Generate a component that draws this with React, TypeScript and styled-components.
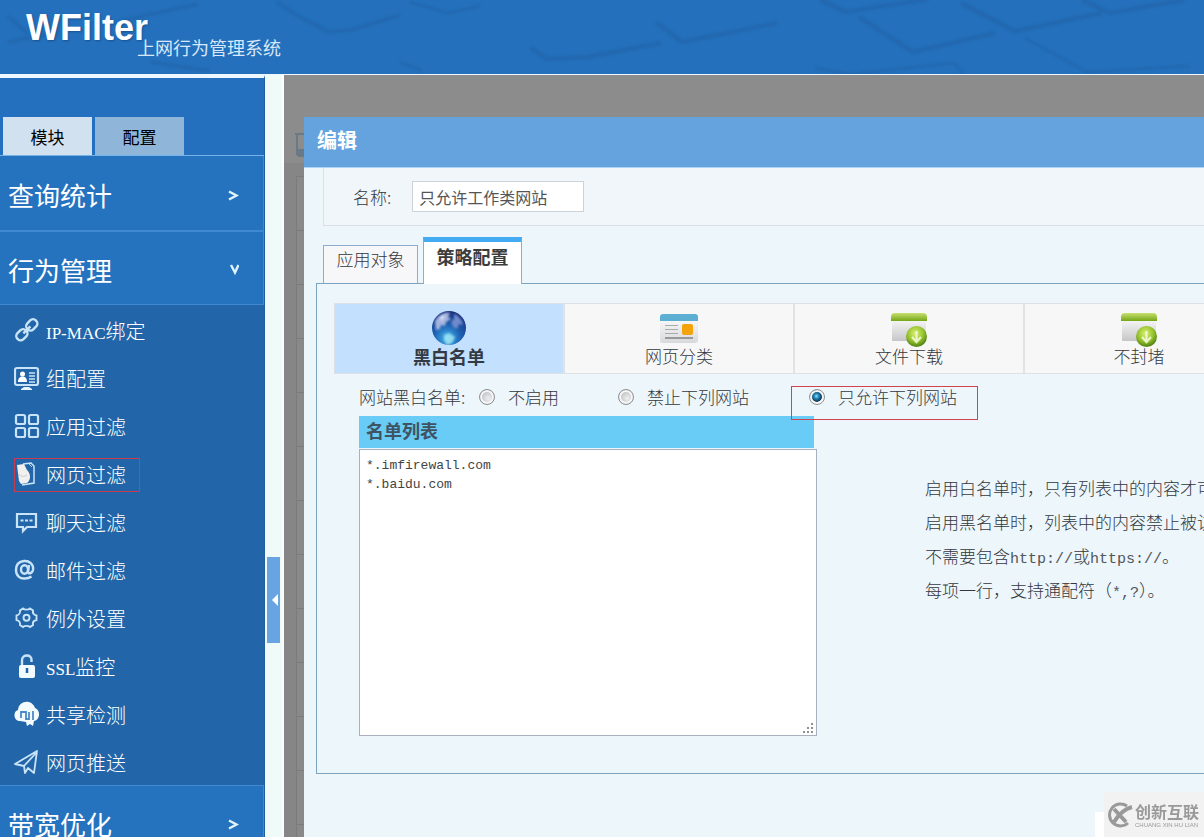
import React, { useState } from "react";
import styled, { createGlobalStyle } from "styled-components";

const GlobalStyle = createGlobalStyle`
  *, *::before, *::after { box-sizing: border-box; }
  body {
    margin: 0;
    font-family: "Noto Sans CJK SC", sans-serif;
    font-size: 17px;
    color: #33383e;
    background: #edf6fa;
  }
  button, input, textarea { font: inherit; color: inherit; margin: 0; }
  button { border: 0; padding: 0; background: none; cursor: pointer; }
  h1, h2, h3, p, ul { margin: 0; padding: 0; font-size: inherit; font-weight: inherit; }
  ul { list-style: none; }
`;

const Page = styled.div`
  display: flex;
  flex-direction: column;
  height: 100vh;
  overflow: hidden;
`;

const Header = styled.header`
  position: relative;
  flex: none;
  height: 75px;
  background: #2470bc;
  border-bottom: 1px solid #eef8fc;
  overflow: hidden;
`;

const HeaderArt = styled.svg`
  position: absolute;
  left: 0;
  top: 0;
`;

const Brand = styled.div`
  position: relative;
  display: flex;
  align-items: flex-start;
  padding: 8px 0 0 26px;
  color: #fff;
`;

const BrandName = styled.h1`
  font: bold 36px/40px "Liberation Sans", sans-serif;
  text-shadow: 1px 1px 2px #1a5290;
`;

const BrandSub = styled.span`
  margin: 27px 0 0 -11px;
  font-size: 18px;
  line-height: 24px;
  color: #d9e8f8;
`;

const Body = styled.div`
  display: flex;
  flex: 1;
  min-height: 0;
`;

const Sidebar = styled.nav`
  flex: none;
  width: 265px;
  overflow: hidden;
  border-top: 3px solid #eef7fd;
  border-right: 1px solid #1d5f9f;
  background: #2470bf;
`;

const SideTabs = styled.div`
  display: flex;
  gap: 3px;
  padding: 39px 3px 0;
  border-bottom: 1px solid #76b2e8;
`;

const SideTab = styled.button<{ $active?: boolean }>`
  width: 89px;
  height: 38px;
  color: #000;
  background: ${(p) => (p.$active ? "#d2e1ef" : "#8fb5d8")};
`;

const Section = styled.button<{ $first?: boolean }>`
  display: flex;
  align-items: center;
  justify-content: space-between;
  width: 100%;
  height: ${(p) => (p.$first ? "76px" : "73px")};
  padding: 3px 24px 0 8px;
  border: solid #3f89d2;
  border-width: ${(p) => (p.$first ? "0 1px 2px 0" : "0 1px 1px 0")};
  font-size: 26px;
  color: #fff;
  background: #2573bf;
`;

const SubMenu = styled.ul`
  border-bottom: 1px solid #3f89d2;
  background: #2266a9;
`;

const SubItem = styled.li`
  display: flex;
  align-items: center;
  height: 48px;
  padding: 4px 0 0 14px;
`;

const SubLink = styled.a<{ $marked?: boolean }>`
  display: flex;
  align-items: center;
  gap: 6px;
  height: 34px;
  padding: 0 14px 2px 0;
  font-size: 20px;
  font-weight: 300;
  color: #fff;
  text-decoration: none;
  box-shadow: ${(p) => (p.$marked ? "inset 0 0 0 1px #c93c50" : "none")};
  svg { flex: none; }
`;

const LatinSerif = styled.span`
  font-family: "Liberation Serif", serif;
  font-size: 17px;
`;

const LatinMono = styled.span`
  font-family: "Liberation Mono", monospace;
  font-size: 15px;
  line-height: 1;
  color: #50555b;
`;

const Gutter = styled.div`
  flex: none;
  width: 19px;
  padding: 482px 0 0 2px;
  background: #f0faf8;
  border-right: 2px solid #fafefe;
`;

const Handle = styled.button`
  display: flex;
  align-items: center;
  justify-content: flex-end;
  width: 13px;
  height: 86px;
  padding-right: 2px;
  background: #68a3e2;
`;

const Main = styled.main`
  position: relative;
  flex: 1;
  min-width: 0;
  overflow: hidden;
  background: #8c8c8c;
`;

const DimBar = styled.div`
  height: 88px;
  padding: 57px 0 0 10px;
  line-height: 0;
`;

const DimArea = styled.div`
  padding: 13px 0 0 12px;
  background: #868686;
`;

const DimRow = styled.div`
  height: 54px;
  border: solid #7b7b7b;
  border-width: 1px 0 0 1px;
  background: #898989;
`;

const Modal = styled.section`
  position: absolute;
  top: 42px;
  bottom: 0;
  left: 20px;
  width: 100%;
  min-width: 980px;
  background: #edf6fa;
`;

const ModalTitle = styled.h2`
  height: 51px;
  padding-left: 13px;
  font-size: 20px;
  line-height: 46px;
  font-weight: bold;
  color: #fff;
  background: #64a3de;
  border-bottom: 1px solid #a9d5f5;
`;

const NameRow = styled.div`
  display: flex;
  align-items: center;
  gap: 21px;
  height: 58px;
  margin-left: 19px;
  padding-left: 29px;
  border: solid #d9e0e6;
  border-width: 0 0 1px 1px;
  background: #f0f6fa;
  font-weight: 300;
`;

const NameInput = styled.input`
  width: 172px;
  height: 31px;
  padding: 0 6px;
  border: 1px solid #ccd3da;
  font-size: 16px;
  font-weight: 400;
  color: #555;
  background: #fff;
`;

const Tabs = styled.div`
  display: flex;
  align-items: flex-end;
  gap: 5px;
  height: 57px;
  margin-left: 19px;
`;

const Tab = styled.button<{ $active?: boolean }>`
  position: relative;
  width: ${(p) => (p.$active ? "99px" : "95px")};
  height: ${(p) => (p.$active ? "47px" : "38px")};
  padding-bottom: ${(p) => (p.$active ? "14px" : "11px")};
  margin-bottom: ${(p) => (p.$active ? "-1px" : "0")};
  border: 1px solid #8cadcb;
  border-bottom: 0;
  border-top: ${(p) => (p.$active ? "5px solid #42abf2" : "1px solid #8cadcb")};
  font-size: ${(p) => (p.$active ? "18px" : "17px")};
  line-height: 20px;
  font-weight: ${(p) => (p.$active ? 700 : 300)};
  color: ${(p) => (p.$active ? "#3c3c3c" : "#33383e")};
  background: ${(p) => (p.$active ? "#fff" : "#f7f6f8")};
`;

const Panel = styled.div`
  height: 491px;
  margin-left: 12px;
  border: 1px solid #7ca3bf;
  padding: 19px 0 0 17px;
`;

const Kinds = styled.div`
  display: grid;
  grid-template-columns: repeat(4, 230px);
  height: 71px;
  border: 1px solid #dde1e6;
  background: #f7f7f7;
`;

const Kind = styled.button<{ $active?: boolean }>`
  display: flex;
  flex-direction: column;
  align-items: center;
  padding-top: 5px;
  border-right: 2px solid #e0e2e6;
  font-size: ${(p) => (p.$active ? "18px" : "17px")};
  line-height: 18px;
  font-weight: ${(p) => (p.$active ? 700 : 300)};
  color: ${(p) => (p.$active ? "#333a44" : "#33383e")};
  background: ${(p) => (p.$active ? "#c4e0ff" : "#f7f7f7")};
`;

const Modes = styled.fieldset`
  display: flex;
  align-items: center;
  height: 42px;
  margin: 0;
  padding: 4px 0 0 25px;
  border: 0;
  min-width: 0;
  font-weight: 300;
`;

const ModesCaption = styled.span`
  width: 120px;
  line-height: 26px;
  white-space: nowrap;
`;

const Mode = styled.label<{ $gap?: number; $marked?: boolean }>`
  position: relative;
  z-index: 1;
  display: flex;
  align-items: center;
  gap: 13px;
  margin-right: ${(p) => p.$gap ?? 0}px;
  line-height: 26px;
  white-space: nowrap;
  &::after {
    content: ${(p) => (p.$marked ? '""' : "none")};
    position: absolute;
    inset: 2px -21px -10px -18px;
    border: 1px solid #d0434f;
    pointer-events: none;
  }
`;

const Radio = styled.input`
  appearance: none;
  width: 16px;
  height: 16px;
  border: 1px solid #8e9297;
  border-radius: 50%;
  background: radial-gradient(circle at 60% 60%, #efefef, #c2c4c8 60%);
  box-shadow: inset 0 0 0 2px #f6f6f6;
  &:checked {
    background: radial-gradient(circle at 46% 44%, #8fe0f8 0, #2488b8 22%, #0c3354 50%, #f6f6f6 58%);
  }
`;

const ListArea = styled.div`
  display: flex;
  gap: 108px;
  padding-left: 25px;
`;

const ListColumn = styled.div`
  position: relative;
  flex: none;
  width: 458px;
`;

const ListTitle = styled.label`
  display: block;
  height: 32px;
  margin: 0 3px 1px 0;
  padding-left: 7px;
  font-size: 18px;
  line-height: 28px;
  font-weight: bold;
  color: #3f5363;
  background: #68ccf7;
`;

const ListBox = styled.textarea`
  display: block;
  width: 100%;
  height: 287px;
  padding: 6px;
  border: 1px solid #abb0bf;
  outline: 0;
  resize: none;
  font: 13px/19px "Liberation Mono", monospace;
  color: #444;
  background: #fff;
`;

const Grip = styled.svg`
  position: absolute;
  right: 3px;
  top: 307px;
`;

const Help = styled.div`
  padding-top: 55px;
  line-height: 34px;
  font-weight: 300;
  white-space: nowrap;
`;

const Watermark = styled.aside`
  position: fixed;
  right: 0;
  bottom: 0;
  display: flex;
  align-items: center;
  gap: 2px;
  width: 100px;
  height: 45px;
  padding-left: 3px;
  color: #999;
  background: #f2f2f2;
  &::before {
    content: "";
    position: absolute;
    right: 100%;
    bottom: 0;
    width: 9px;
    height: 25px;
    background: #fff;
  }
`;

const MarkText = styled.div`
  font-size: 16px;
  line-height: 22px;
  font-weight: bold;
  white-space: nowrap;
`;

const MarkSub = styled.div`
  font: 6px/7px "Liberation Sans", sans-serif;
  white-space: nowrap;
`;

const sideIcons: Record<string, React.ReactNode> = {
  link: (
    <g strokeWidth="2.400" transform="rotate(-45 13 13)">
      <rect x="0" y="8.500" width="12" height="8.500" rx="4" />
      <rect x="14" y="8.500" width="12" height="8.500" rx="4" />
      <path d="M8 12.800h10" />
    </g>
  ),
  group: (
    <>
      <rect x="1" y="3" width="23" height="17" rx="2" strokeWidth="2.200" />
      <path d="M7 25v-1l3-2h5l3 2v1z" fill="#e6f4fb" stroke="none" />
      <circle cx="8.500" cy="9" r="2.500" fill="#fff" stroke="none" />
      <path d="M4 17c0-4 2-5.500 4.500-5.500s4.500 1.500 4.500 5.500z" fill="#fff" stroke="none" />
      <path d="M15 8h6M15 11h6M15 14h6M15 17h6" strokeWidth="1.300" />
    </>
  ),
  apps: (
    <g strokeWidth="2.200">
      <rect x="2" y="2" width="9" height="9" rx="1.500" />
      <rect x="15" y="2" width="9" height="9" rx="1.500" />
      <rect x="2" y="15" width="9" height="9" rx="1.500" />
      <rect x="15" y="15" width="9" height="9" rx="1.500" />
    </g>
  ),
  web: (
    <>
      <path d="M9 3l8-1 3 3v17l-12 2" strokeWidth="1.500" />
      <path d="M3 4l7-1 3 6c4 4 4 10 0 13l-6 1-2-3z" fill="#f1f0ee" stroke="none" />
      <path d="M5 13c2 3 5 3 8 1M15 3l3 3" stroke="#c8ccd0" strokeWidth="1" />
    </>
  ),
  chat: (
    <>
      <path d="M3 5h19v13H13l-4 4v-4H3z" strokeWidth="2.200" />
      <path d="M6.500 11.500h3M11 11.500h3M15.500 11.500h3" strokeWidth="2.200" />
    </>
  ),
  at: (
    <g strokeWidth="2.400">
      <ellipse cx="10.500" cy="12.500" rx="3.500" ry="4.200" />
      <path d="M15 8l-1 7c0 2 4 2 5-2 1-6-4-9.500-9-9-5 .6-8 4-8 9 0 6 4 9 9 8.500 3 0 5-1 6.500-2" />
    </g>
  ),
  gear: (
    <g strokeWidth="1.900">
      <path d="M9 3.500c1.500 1.500 5.500 1.500 7 0l3 2c-.5 2.500 1 4.500 3.500 5v4.500c-2.500.5-4 2.500-3.500 5l-3 2c-1.500-1.500-5.500-1.500-7 0l-3-2c.5-2.500-1-4.500-3.500-5v-4.500c2.500-.5 4-2.500 3.500-5z" />
      <circle cx="12.500" cy="12.700" r="3" />
    </g>
  ),
  lock: (
    <>
      <path d="M8 12V7c0-6 10-6 9.500 0v2" strokeWidth="2.400" />
      <rect x="5" y="12" width="16" height="13" rx="2" fill="#f2fbff" stroke="none" />
      <path d="M13 15v5" stroke="#2266a9" strokeWidth="2.500" />
    </>
  ),
  share: (
    <>
      <path d="M6 20C-1 20-1 10 4 9 5-1 18-2 21 7c6 2 5 12-1 13l-1 5-3-2-3 2-1-4z" fill="#f4fbff" stroke="none" />
      <path d="M7 17v-6h5v7h3v-7M19 10v9" stroke="#4a8cc8" strokeWidth="1.800" />
    </>
  ),
  send: (
    <path d="M1 15L23 2l-3 22-6-5-3 5-1-7zM10 17L22 4" strokeWidth="1.800" strokeLinejoin="round" />
  ),
};

const SideIcon = ({ name }: { name: string }) => (
  <svg width="26" height="26" viewBox="0 0 26 26" fill="none" stroke="#c9e4f8" aria-hidden="true">
    {sideIcons[name]}
  </svg>
);

const Chevron = ({ down }: { down?: boolean }) => (
  <svg width="12" height="22" viewBox="0 0 12 22" fill="none" stroke="#dff3fb" strokeWidth="2.400" aria-hidden="true">
    <path d={down ? "M4 6L8 13.500L11.500 6" : "M2 7.500L9.500 11.500L2 15.500"} />
  </svg>
);

const GlobeIcon = () => (
  <svg width="36" height="38" viewBox="0 0 36 38" aria-hidden="true">
    <defs>
      <radialGradient id="globe" cx="45%" cy="80%" r="85%">
        <stop offset="0" stopColor="#45b8ee" />
        <stop offset=".45" stopColor="#1d62b4" />
        <stop offset="1" stopColor="#1c2672" />
      </radialGradient>
      <filter id="haze"><feGaussianBlur stdDeviation="0.900" /></filter>
    </defs>
    <circle cx="18" cy="19" r="17" fill="url(#globe)" />
    <g filter="url(#haze)">
      <path d="M4 12C8 5 14 3 19 4l-2 4 3 2-5 3-1 4-4-1-1 4-4 1z" fill="#a5b5df" />
      <path d="M23 5c5 2 8 6 9 11l-4-1-2 5-4-2-2-5 3-3z" fill="#6f8acb" />
      <path d="M13 26l5-2 6 4-3 6-5 2-3-5z" fill="#a8e9f4" opacity=".8" />
      <path d="M9 8l5-2-3 6z" fill="#dce4f5" />
    </g>
  </svg>
);

const CardIcon = () => (
  <svg width="38" height="38" viewBox="0 0 38 38" aria-hidden="true">
    <defs>
      <linearGradient id="card" x2="0" y2="1">
        <stop offset="0" stopColor="#fff" />
        <stop offset="1" stopColor="#d8d9db" />
      </linearGradient>
    </defs>
    <rect x="0" y="5" width="38" height="29" rx="3" fill="url(#card)" />
    <path d="M0 12V8q0-3 3-3h32q3 0 3 3v4z" fill="#5daed3" />
    <path d="M5 16.500h13M5 20.500h13M5 24.500h13" stroke="#aaa" strokeWidth="1.200" />
    <path d="M5 29h28" stroke="#999" strokeWidth="2" />
    <rect x="22" y="15" width="11" height="11" rx="2" fill="#f5a30a" />
  </svg>
);

const DownloadIcon = () => (
  <svg width="36" height="38" viewBox="0 0 36 38" aria-hidden="true">
    <defs>
      <linearGradient id="box" x2="0" y2="1">
        <stop offset="0" stopColor="#fafafa" />
        <stop offset="1" stopColor="#c6c6c8" />
      </linearGradient>
      <linearGradient id="lid" x2="0" y2="1">
        <stop offset="0" stopColor="#c7e06f" />
        <stop offset="1" stopColor="#74a516" />
      </linearGradient>
      <radialGradient id="ball" cx="45%" cy="35%" r="65%">
        <stop offset="0" stopColor="#dcf077" />
        <stop offset=".6" stopColor="#94c22b" />
        <stop offset="1" stopColor="#4e7e12" />
      </radialGradient>
    </defs>
    <rect x="1" y="9" width="34" height="23" rx="1" fill="url(#box)" />
    <path d="M0 12V8q0-4 4-4h28q4 0 4 4v4z" fill="url(#lid)" />
    <circle cx="25.500" cy="27.500" r="10.500" fill="url(#ball)" />
    <path d="M25.500 22v10M21 28l4.500 5 4.500-5" fill="none" stroke="#f6fbe0" strokeWidth="2.200" opacity=".85" />
  </svg>
);

const menu: [string, React.ReactNode][] = [
  ["link", <><LatinSerif>IP-MAC</LatinSerif>绑定</>],
  ["group", "组配置"],
  ["apps", "应用过滤"],
  ["web", "网页过滤"],
  ["chat", "聊天过滤"],
  ["at", "邮件过滤"],
  ["gear", "例外设置"],
  ["lock", <><LatinSerif>SSL</LatinSerif>监控</>],
  ["share", "共享检测"],
  ["send", "网页推送"],
];

const kinds: [string, () => React.ReactElement][] = [
  ["黑白名单", GlobeIcon],
  ["网页分类", CardIcon],
  ["文件下载", DownloadIcon],
  ["不封堵", DownloadIcon],
];

const modes = [
  { id: "off", text: "不启用", gap: 59 },
  { id: "deny", text: "禁止下列网站", gap: 60 },
  { id: "allow", text: "只允许下列网站", gap: 0 },
];

export default function App() {
  const [mode, setMode] = useState("allow");
  return (
    <Page>
      <GlobalStyle />
      <Header>
        <HeaderArt width="1204" height="74" fill="none" stroke="#2062a6" strokeLinejoin="round" opacity=".5" aria-hidden="true">
          <defs>
            <filter id="soft"><feGaussianBlur stdDeviation="1.300" /></filter>
          </defs>
          <g filter="url(#soft)">
            <path strokeWidth="4" d="M277 2l18 12 34 18 22-2 49-15M120 21l78-17M8 16l20 18M8 42l50-10M150 62l60 9" />
            <path strokeWidth="5" d="M531 48l16 11 40-2 74-14M656 22l26 20 95-19" />
            <path strokeWidth="5" d="M820 0l26 12 82-13M859 17l54 35 82-19M961 3l54 28 87-18M1082 0l28 13 74-13" />
            <path strokeWidth="3" d="M1025 38l62 34 103-6M815 68l36 6 103-11 10 11M400 62l22 9M410 2l38 11 32-7" />
          </g>
        </HeaderArt>
        <Brand>
          <BrandName>WFilter</BrandName>
          <BrandSub>上网行为管理系统</BrandSub>
        </Brand>
      </Header>
      <Body>
        <Sidebar>
          <SideTabs>
            <SideTab $active>模块</SideTab>
            <SideTab>配置</SideTab>
          </SideTabs>
          <Section $first>查询统计<Chevron /></Section>
          <Section>行为管理<Chevron down /></Section>
          <SubMenu>
            {menu.map(([icon, label]) => (
              <SubItem key={icon}>
                <SubLink href="#" $marked={icon === "web"}>
                  <SideIcon name={icon} />
                  <span>{label}</span>
                </SubLink>
              </SubItem>
            ))}
          </SubMenu>
          <Section>带宽优化<Chevron /></Section>
        </Sidebar>
        <Gutter>
          <Handle aria-label="收起">
            <svg width="6" height="12" viewBox="0 0 6 12" aria-hidden="true"><path d="M6 0v12L0 6z" fill="#fff" /></svg>
          </Handle>
        </Gutter>
        <Main>
          <DimBar>
            <svg width="20" height="26" viewBox="0 0 20 26" fill="none" stroke="#697985" strokeWidth="2" aria-hidden="true">
              <path d="M1 2h18M3 3v17q0 4 4 4h6q4 0 4-4V3" />
              <path d="M3 18h14v3q0 3-4 3H7q-4 0-4-3z" fill="#697985" />
            </svg>
          </DimBar>
          <DimArea>
            {Array.from({ length: 13 }, (_, i) => <DimRow key={i} />)}
          </DimArea>
          <Modal role="dialog" aria-labelledby="modal-title">
            <ModalTitle id="modal-title">编辑</ModalTitle>
            <NameRow>
              <label htmlFor="policy-name">名称:</label>
              <NameInput id="policy-name" defaultValue="只允许工作类网站" />
            </NameRow>
            <Tabs>
              <Tab>应用对象</Tab>
              <Tab $active>策略配置</Tab>
            </Tabs>
            <Panel>
              <Kinds>
                {kinds.map(([label, Icon], i) => (
                  <Kind key={label} $active={i === 0}><Icon />{label}</Kind>
                ))}
              </Kinds>
              <Modes>
                <ModesCaption>网站黑白名单:</ModesCaption>
                {modes.map((m) => (
                  <Mode key={m.id} $gap={m.gap} $marked={m.id === "allow"}>
                    <Radio type="radio" name="mode" checked={mode === m.id} onChange={() => setMode(m.id)} />
                    {m.text}
                  </Mode>
                ))}
              </Modes>
              <ListArea>
                <ListColumn>
                  <ListTitle htmlFor="site-list">名单列表</ListTitle>
                  <ListBox id="site-list" spellCheck={false} defaultValue={"*.imfirewall.com\n*.baidu.com"} />
                  <Grip width="11" height="11" fill="#8d8f98" aria-hidden="true">
                    <path d="M8 0h2v2h-2zM4 4h2v2h-2zM8 4h2v2h-2zM0 8h2v2h-2zM4 8h2v2h-2zM8 8h2v2h-2z" />
                  </Grip>
                </ListColumn>
                <Help>
                  <p>启用白名单时，只有列表中的内容才可以访问。</p>
                  <p>启用黑名单时，列表中的内容禁止被访问。</p>
                  <p>不需要包含<LatinMono>http://</LatinMono>或<LatinMono>https://</LatinMono>。</p>
                  <p>每项一行，支持通配符（<LatinMono>*,?</LatinMono>）。</p>
                </Help>
              </ListArea>
            </Panel>
          </Modal>
        </Main>
      </Body>
      <Watermark>
        <svg width="26" height="26" viewBox="0 0 26 26" fill="none" stroke="#999" aria-hidden="true">
          <path d="M20 4A11 11 0 1 0 21 21" strokeWidth="3" />
          <path d="M7 7l12 13M25 5C17 7 12 12 7 20" strokeWidth="4" />
        </svg>
        <div>
          <MarkText>创新互联</MarkText>
          <MarkSub>CHUANG XIN HU LIAN</MarkSub>
        </div>
      </Watermark>
    </Page>
  );
}
